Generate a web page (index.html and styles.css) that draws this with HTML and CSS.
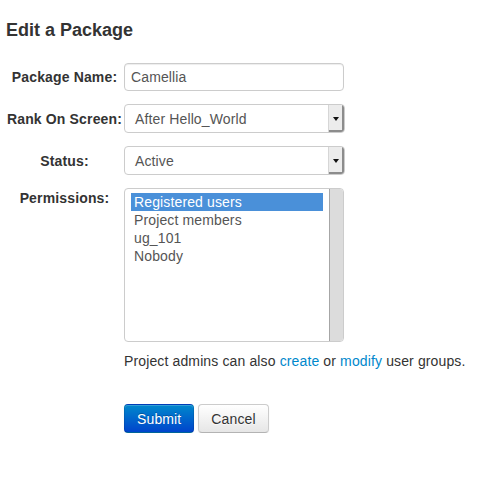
FILE: index.html
```html
<!DOCTYPE html>
<html lang="en">
<head>
<meta charset="utf-8">
<title>Edit a Package</title>
<link rel="stylesheet" href="styles.css">
</head>
<body>
<div class="page">
  <h2 class="title">Edit a Package</h2>
  <form class="form">
    <div class="grid">
      <label class="label">Package Name:</label>
      <div class="input">Camellia</div>

      <label class="label">Rank On Screen:</label>
      <div class="select">
        <span class="select-value">After Hello_World</span>
        <span class="select-btn"><span class="arrow"></span></span>
      </div>

      <label class="label">Status:</label>
      <div class="select">
        <span class="select-value">Active</span>
        <span class="select-btn"><span class="arrow"></span></span>
      </div>

      <label class="label label-top">Permissions:</label>
      <div class="listbox">
        <div class="options">
          <div class="option selected">Registered users</div>
          <div class="option">Project members</div>
          <div class="option">ug_101</div>
          <div class="option">Nobody</div>
        </div>
        <div class="track"></div>
      </div>
    </div>
    <div class="footer">
      <p class="help">Project admins can also <a href="#" class="link">create</a> or <a href="#" class="link">modify</a> user groups.</p>
      <div class="actions">
        <button type="button" class="btn btn-primary">Submit</button>
        <button type="button" class="btn">Cancel</button>
      </div>
    </div>
  </form>
</div>
</body>
</html>
```
FILE: styles.css
```css
html, body {
  margin: 0;
  padding: 0;
  background: #fff;
}
body {
  font-family: "Liberation Sans", Arial, sans-serif;
  font-size: 14px;
  line-height: 20px;
  color: #333;
  letter-spacing: 0.13px;
}
.page {
  padding: 0 6px;
}
.title {
  margin: 20px 0 0;
  font-size: 18px;
  line-height: 20px;
  font-weight: bold;
  color: #333;
  letter-spacing: 0;
}
.form {
  margin: 23px 0 0;
}
.grid {
  display: grid;
  grid-template-columns: 117px 221px;
  column-gap: 1px;
  row-gap: 13px;
  align-items: center;
}
.label {
  font-weight: bold;
  text-align: center;
  white-space: nowrap;
  color: #333;
  letter-spacing: 0.15px;
}
.label-top {
  align-self: start;
}
.input {
  box-sizing: border-box;
  width: 220px;
  height: 28px;
  border: 1px solid #ccc;
  border-radius: 4px;
  box-shadow: inset 0 1px 1px rgba(0, 0, 0, 0.075);
  padding: 0 6px;
  display: flex;
  align-items: center;
  color: #555;
}
.select {
  box-sizing: border-box;
  width: 221px;
  height: 29px;
  border: 1px solid #ccc;
  border-radius: 4px;
  display: flex;
  align-items: stretch;
  background: #fff;
  overflow: hidden;
  color: #555;
}
.select-value {
  flex: 1;
  display: flex;
  align-items: center;
  padding-left: 10px;
}
.select-btn {
  width: 13px;
  background: #ececec;
  border-left: 1px solid #d6d6d6;
  box-shadow: inset -2px -2px 0 #8c8c8c;
  display: flex;
  align-items: center;
  justify-content: center;
  padding-right: 2px;
}
.arrow {
  width: 0;
  height: 0;
  border-left: 3px solid transparent;
  border-right: 3px solid transparent;
  border-top: 4px solid #111;
}
.listbox {
  box-sizing: border-box;
  width: 220px;
  height: 154px;
  border: 1px solid #ccc;
  border-radius: 4px;
  display: flex;
  overflow: hidden;
  background: #fff;
}
.options {
  flex: 1;
  padding: 4px 6px 0;
}
.option {
  height: 18px;
  line-height: 18px;
  padding-left: 3px;
  color: #555;
  white-space: nowrap;
}
.option.selected {
  background: #4a90d9;
  color: #fff;
}
.track {
  width: 13px;
  background: #dcdcdc;
  border-left: 1px solid #a6a6a6;
}
.footer {
  padding-left: 118px;
  margin-top: 9px;
}
.help {
  margin: 0;
  color: #333;
}
.link {
  color: #0088cc;
  text-decoration: none;
}
.actions {
  margin-top: 33px;
  display: flex;
  gap: 4px;
}
.btn {
  box-sizing: border-box;
  height: 29px;
  padding: 0 12px;
  font-family: "Liberation Sans", Arial, sans-serif;
  font-size: 14px;
  line-height: 20px;
  letter-spacing: 0.13px;
  color: #333;
  background: linear-gradient(#ffffff, #e6e6e6);
  border: 1px solid #ccc;
  border-bottom-color: #b3b3b3;
  border-radius: 4px;
  box-shadow: inset 0 1px 0 rgba(255, 255, 255, 0.2), 0 1px 2px rgba(0, 0, 0, 0.05);
  text-shadow: 0 1px 1px rgba(255, 255, 255, 0.75);
  cursor: pointer;
}
.btn-primary {
  color: #fff;
  background: linear-gradient(#0088cc, #0044cc);
  border-color: rgba(0, 0, 0, 0.1) rgba(0, 0, 0, 0.1) rgba(0, 0, 0, 0.25);
  text-shadow: 0 -1px 0 rgba(0, 0, 0, 0.25);
}
```
